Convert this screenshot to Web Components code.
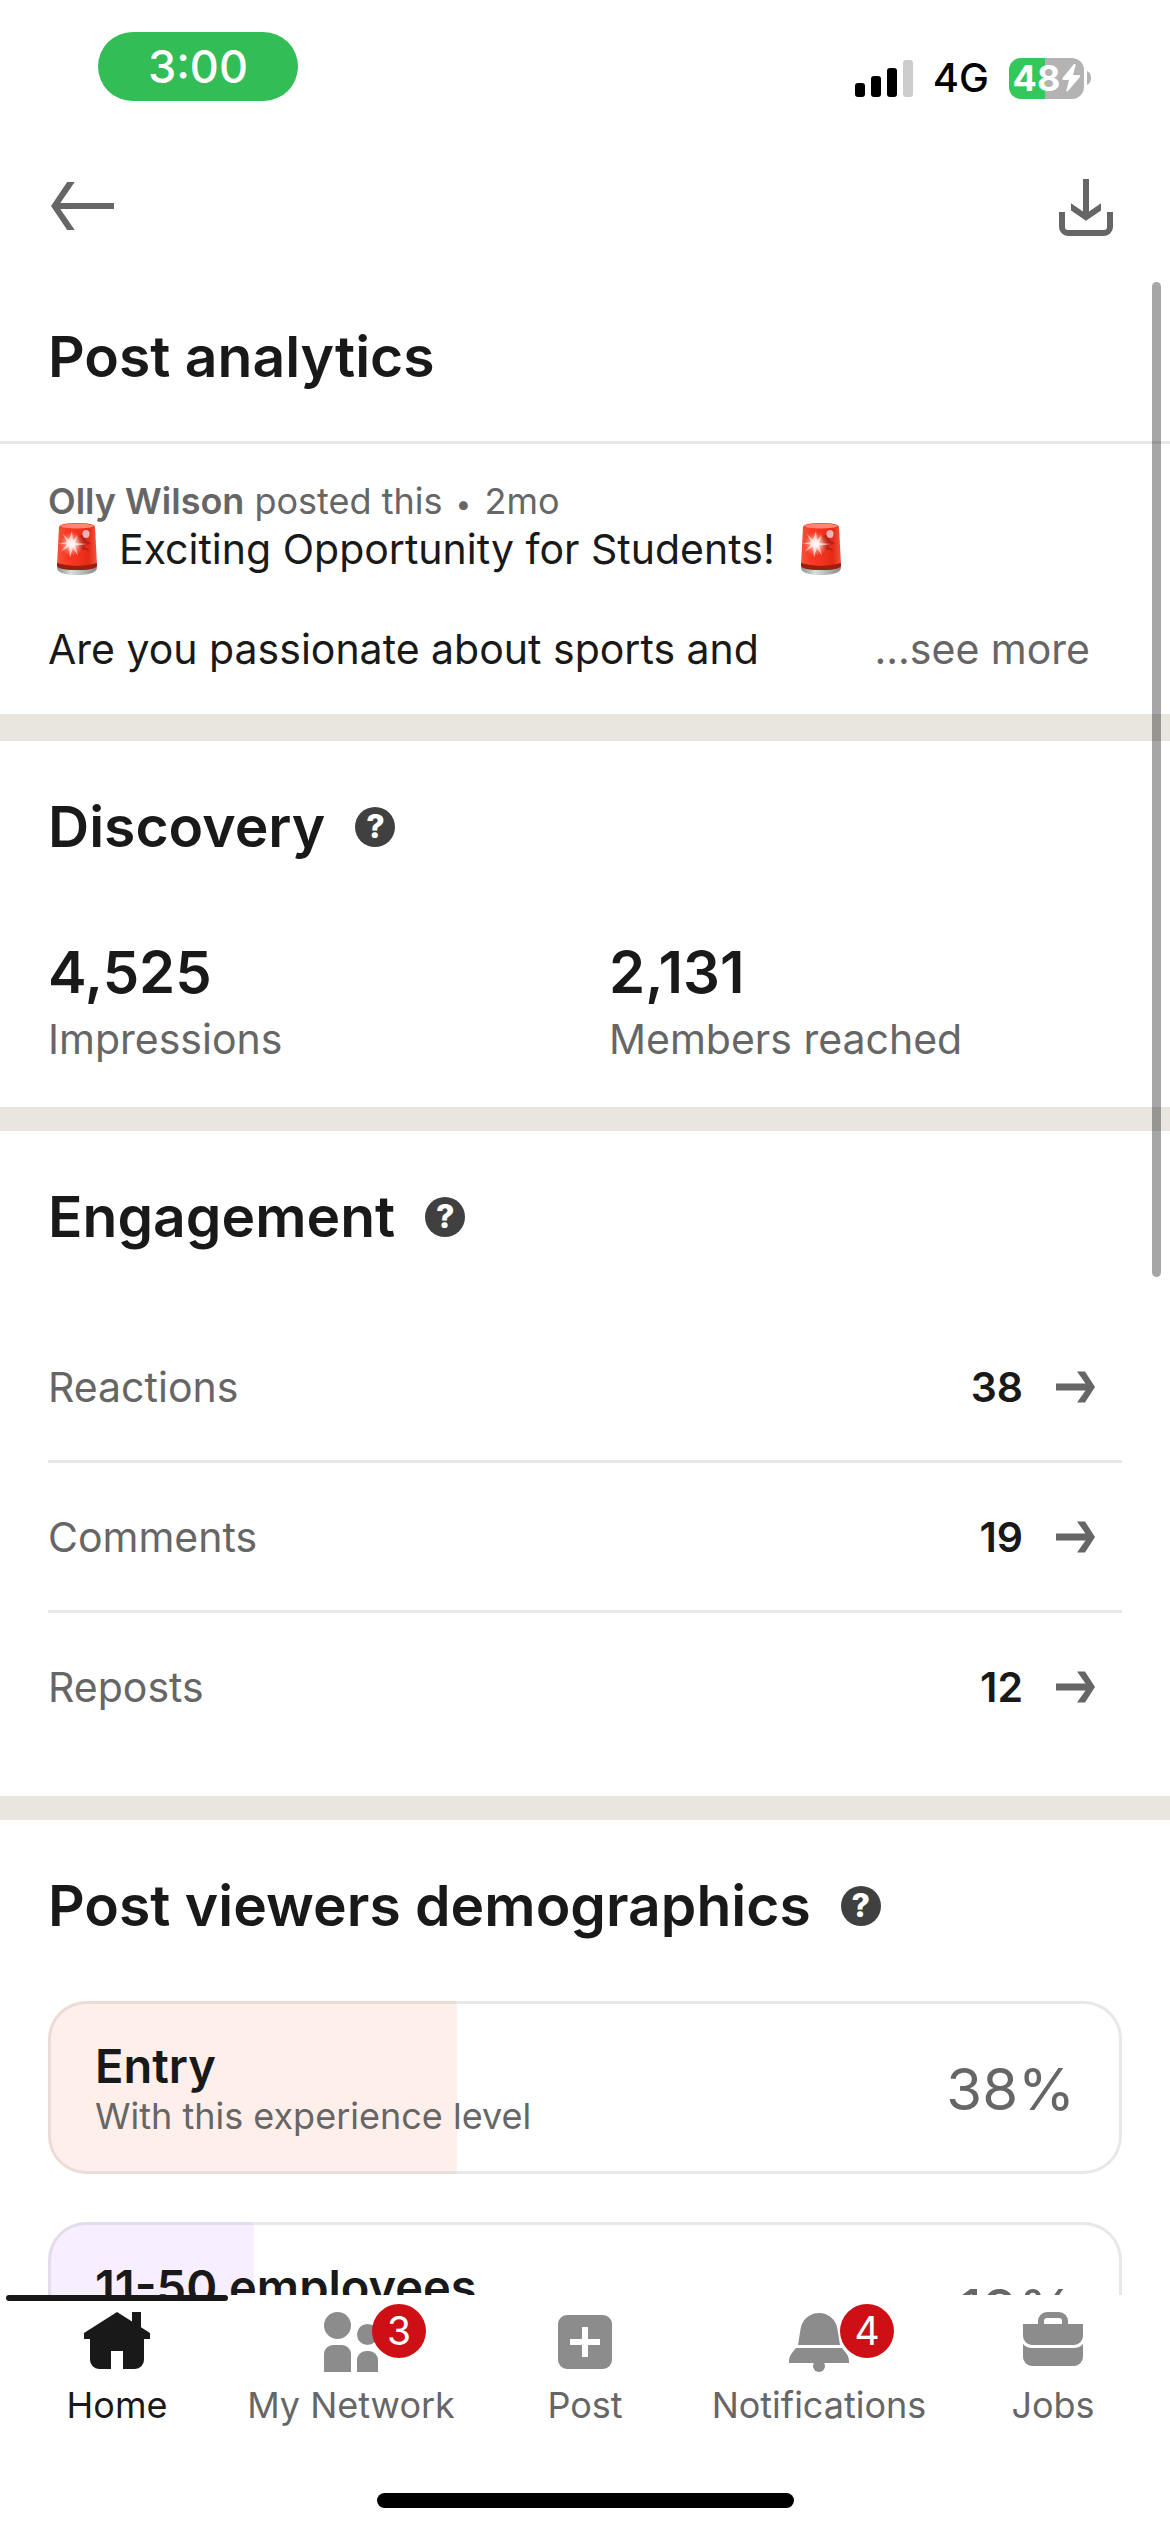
<!DOCTYPE html>
<html lang="en">
<head>
<meta charset="utf-8">
<meta name="viewport" content="width=device-width, initial-scale=1">
<title>Post analytics</title>
<style>
  html, body { margin: 0; height: 100%; }
  body {
    --ink: #191919; --muted: #666; --line: #e8e8e8; --band: #e9e5df; --icon: #8c8c8c;
    --gutter: 48px;
    font-family: Inter, "Liberation Sans", sans-serif;
    color: var(--ink); background: #fff;
  }
</style>
</head>
<body>
<analytics-app>
  <status-bar slot="top" time="3:00" network="4G" battery="48"></status-bar>
  <nav-header slot="top"></nav-header>

  <page-title>Post analytics</page-title>
  <post-summary author="Olly Wilson" age="2mo">
    <span slot="headline">Exciting Opportunity for Students!</span>
    <span slot="body">Are you passionate about sports and</span>
  </post-summary>

  <analytics-section heading="Discovery">
    <stat-group>
      <stat-item value="4,525">Impressions</stat-item>
      <stat-item value="2,131">Members reached</stat-item>
    </stat-group>
  </analytics-section>

  <analytics-section heading="Engagement">
    <metric-list>
      <metric-row value="38">Reactions</metric-row>
      <metric-row value="19">Comments</metric-row>
      <metric-row value="12">Reposts</metric-row>
    </metric-list>
  </analytics-section>

  <analytics-section heading="Post viewers demographics">
    <demographic-list>
      <demographic-card percent="38" tint="#ffefeb" edge="#ebdcd9" label="Entry">With this experience level</demographic-card>
      <demographic-card percent="19" tint="#f7eeff" edge="#e3dceb" label="11-50 employees"></demographic-card>
    </demographic-list>
  </analytics-section>

  <tab-bar slot="bottom">
    <tab-item icon="home" active>Home</tab-item>
    <tab-item icon="network" badge="3">My Network</tab-item>
    <tab-item icon="post">Post</tab-item>
    <tab-item icon="bell" badge="4">Notifications</tab-item>
    <tab-item icon="jobs">Jobs</tab-item>
  </tab-bar>
</analytics-app>

<script>
const define = (name, render) => customElements.define(name, class extends HTMLElement {
  constructor() { super(); this.attachShadow({ mode: 'open' }); }
  connectedCallback() {
    this.shadowRoot.innerHTML =
      `<style>*{box-sizing:border-box} :host{display:block} svg{display:block;flex:none}
        button{font:inherit;border:0;padding:0;background:none;color:inherit;cursor:pointer}
        a{color:inherit;text-decoration:none}</style>` + render(this);
  }
});
const attr = (el, name) => el.getAttribute(name) || '';

const icons = {
  home: '<path d="M12 2l5 3.2V2h3v5.1L23 9v2h-2v7a3 3 0 0 1-3 3h-4v-6h-4v6H6a3 3 0 0 1-3-3v-7H1V9z"/>',
  network: '<circle cx="7.5" cy="6.5" r="4.5"/><path d="M3 22v-6a3 3 0 0 1 3-3h3a3 3 0 0 1 3 3v6z"/><circle cx="17.5" cy="9.5" r="3.5"/><path d="M14 22v-4a3 3 0 0 1 3-3h1a3 3 0 0 1 3 3v4z"/>',
  post: '<path fill-rule="evenodd" d="M6 3h12a3 3 0 0 1 3 3v12a3 3 0 0 1-3 3H6a3 3 0 0 1-3-3V6a3 3 0 0 1 3-3zm5 4v4H7v2h4v4h2v-4h4v-2h-4V7z"/>',
  bell: '<path d="M5 13l.9-5.6a6.2 6.2 0 0 1 12.2 0L19 13zM4.300 14h15.400l1.300 1.700c.7.9 1 1.700 1 2.800v.5H2v-.5c0-1.100.3-1.900 1-2.800z"/><circle cx="12" cy="20" r="2"/>',
  jobs: '<path fill-rule="evenodd" d="M7 6V5a3 3 0 0 1 3-3h4a3 3 0 0 1 3 3v1h5v4a3 3 0 0 1-3 3H5a3 3 0 0 1-3-3V6zm2 0h6V5a1 1 0 0 0-1-1h-4a1 1 0 0 0-1 1z"/><path d="M2 12.700A4 4 0 0 0 5 14h14a4 4 0 0 0 3-1.300V17a3 3 0 0 1-3 3H5a3 3 0 0 1-3-3z"/>',
};

const siren = id => `<svg width="54" height="54" viewBox="-2 0 54 54" role="img" aria-label="Police car light">
  <defs>
    <linearGradient id="g${id}" x1="0" x2="1"><stop offset="0" stop-color="#f2553c"/><stop offset=".25" stop-color="#fb3a24"/><stop offset=".8" stop-color="#e62a18"/><stop offset="1" stop-color="#f0563c"/></linearGradient>
    <linearGradient id="b${id}" x1="0" x2="1"><stop offset="0" stop-color="#8e8e8e"/><stop offset=".35" stop-color="#dcdcdc"/><stop offset="1" stop-color="#8a8a8a"/></linearGradient>
    <radialGradient id="s${id}"><stop offset="0" stop-color="#fff"/><stop offset=".3" stop-color="#ffd9d2" stop-opacity=".9"/><stop offset="1" stop-color="#ff8d78" stop-opacity="0"/></radialGradient>
  </defs>
  <path d="M7 43q20 7 40 0v3q-1 7-20 7T7 46z" fill="url(#b${id})"/>
  <path d="M9 5q1-4 18-4t18 4l2 38q-1 5-20 5T7 43z" fill="url(#g${id})"/>
  <path d="M7 41q20 6 40 0v3q-2 4-20 4T7 44z" fill="#9c1d12"/>
  <ellipse cx="27" cy="4" rx="16" ry="2.500" fill="#f98a70"/>
  <path d="M28 14l9-3-1 7 5 3-7 3 6 5-11-2z" fill="#a91c12" opacity=".7"/>
  <ellipse cx="36" cy="12" rx="3.500" ry="4" fill="#f6c9d2" opacity=".85"/>
  <circle cx="22" cy="22" r="12" fill="url(#s${id})"/>
  <path d="M22 9l1 10 5-6-3 8 12 1-12 1.500 3 10-5-8-3 10-1-11-8 5 6-7-8-1 8-1.500-4-8 6 6z" fill="#fff" opacity=".65"/>
</svg>`;

define('analytics-app', () => `
  <style>
    :host { display: flex; flex-direction: column; height: 100vh; overflow: hidden; }
    .view { position: relative; flex: 1; min-height: 0; }
    main { height: 100%; overflow-y: auto; scrollbar-width: none; }
    .thumb { position: absolute; top: 9px; right: 9px; width: 9px; height: 995px; border-radius: 5px; background: rgba(0,0,0,.35); }
  </style>
  <slot name="top"></slot>
  <div class="view"><main><slot></slot></main><div class="thumb"></div></div>
  <slot name="bottom"></slot>`);

define('status-bar', el => `
  <style>
    :host { flex: none; }
    .bar { display: flex; justify-content: space-between; align-items: flex-start; height: 141px; padding: 32px 79px 0 98px; }
    .pill { width: 200px; height: 69px; border-radius: 35px; background: #33bd56; color: #fff; font-size: 45px; font-weight: 500; line-height: 69px; text-align: center; }
    .right { display: flex; align-items: center; gap: 20px; padding-top: 25px; color: #000; }
    .net { font-size: 40px; font-weight: 500; line-height: 42px; }
    .power { display: flex; align-items: center; gap: 3px; }
    .cell { display: flex; align-items: center; justify-content: center; gap: 2px; width: 75px; height: 41px; border-radius: 12px; color: #fff; font-size: 36px; font-weight: 700; line-height: 41px;
      background: linear-gradient(90deg, #34c759 ${attr(el, 'battery')}%, #b3b3b3 ${attr(el, 'battery')}%); }
  </style>
  <div class="bar">
    <div class="pill">${attr(el, 'time')}</div>
    <div class="right">
      <svg width="58" height="37" viewBox="0 0 58 37"><rect y="23" width="10" height="14" rx="3"/><rect x="16" y="16" width="10" height="21" rx="3"/><rect x="32" y="8" width="10" height="29" rx="3"/><rect x="48" width="10" height="37" rx="3" fill="#ccc"/></svg>
      <span class="net">${attr(el, 'network')}</span>
      <div class="power">
        <div class="cell"><span>${attr(el, 'battery')}</span><svg width="18" height="28" viewBox="0 0 18 28" fill="#fff"><path d="M12 0q2-1 1.500 1.500L11 11h6q2 .5.5 2.500L6 27q-2 1.500-1.500-1L7 16H1.500q-2-.5-.5-2.500z"/></svg></div>
        <svg width="4" height="14" viewBox="0 0 4 14" fill="#b3b3b3"><path d="M0 0q4 2 4 7T0 14z"/></svg>
      </div>
    </div>
  </div>`);

define('nav-header', () => `
  <style>
    :host { flex: none; }
    header { display: flex; justify-content: space-between; padding: 32px var(--gutter) 28px; color: var(--muted); }
  </style>
  <header>
    <button aria-label="Back"><svg width="72" height="72" viewBox="0 0 24 24" fill="currentColor"><path d="M1 11l5.400-8h2.500L4.100 10H22v2H4.100l4.800 7H6.400z"/></svg></button>
    <button aria-label="Download"><svg width="72" height="72" viewBox="0 0 24 24" fill="currentColor"><path d="M11 2h2v10.800l4-2.700v2.400l-5 3.400-5-3.400v-2.400l4 2.700zM3 13h2v5a1 1 0 0 0 1 1h12a1 1 0 0 0 1-1v-5h2v5a3 3 0 0 1-3 3H6a3 3 0 0 1-3-3z"/></svg></button>
  </header>`);

define('page-title', () => `
  <style>
    :host { padding: 48px var(--gutter); border-bottom: 3px solid var(--line); }
    h1 { margin: 0; font-size: 57px; font-weight: 600; line-height: 72px; }
  </style>
  <h1><slot></slot></h1>`);

define('post-summary', el => `
  <style>
    :host { padding: 34px var(--gutter) 40px; border-bottom: 3px solid var(--band); }
    p { margin: 0; font-size: 41px; line-height: 50px; }
    .meta { font-size: 36px; line-height: 46px; color: var(--muted); }
    .meta b { font-weight: 600; }
    .dot { margin: 0 3px; font-size: 28px; line-height: 1; }
    .headline { display: flex; align-items: center; gap: 17px; padding-bottom: 50px; }
    .headline svg { margin: -2px 0; }
    .body { display: flex; justify-content: space-between; padding-right: 32px; }
    button { color: var(--muted); }
  </style>
  <p class="meta"><b>${attr(el, 'author')}</b> posted this <span class="dot">•</span> ${attr(el, 'age')}</p>
  <p class="headline">${siren('a')}<slot name="headline"></slot>${siren('b')}</p>
  <p class="body"><slot name="body"></slot><button>...see more</button></p>`);

define('analytics-section', el => `
  <style>
    :host { border-top: 24px solid var(--band); }
    header { display: flex; align-items: center; gap: 30px; padding: 50px var(--gutter) 0; }
    h2 { margin: 0; font-size: 57px; font-weight: 600; line-height: 72px; }
    button { width: 40px; height: 40px; border-radius: 50%; background: #404040; color: #fff; font-size: 32px; font-weight: 800; line-height: 40px; text-align: center; }
  </style>
  <header><h2>${attr(el, 'heading')}</h2><button aria-label="About ${attr(el, 'heading')}">?</button></header>
  <slot></slot>`);

define('stat-group', () => `
  <style>:host { display: grid; grid-template-columns: 1fr 1fr; gap: 48px; padding: 73px var(--gutter) 43px; }</style>
  <slot></slot>`);

define('stat-item', el => `
  <style>
    strong { display: block; font-size: 58px; font-weight: 600; line-height: 72px; padding-bottom: 6px; }
    span { display: block; font-size: 41px; line-height: 50px; color: var(--muted); }
  </style>
  <strong>${attr(el, 'value')}</strong><span><slot></slot></span>`);

define('metric-list', () => `
  <style>
    :host { padding: 60px var(--gutter) 36px; }
    ::slotted(:not(:last-child)) { border-bottom: 3px solid var(--line); }
  </style>
  <slot></slot>`);

define('metric-row', el => `
  <style>
    a { display: flex; align-items: center; gap: 27px; height: 147px; padding-right: 24px; font-size: 41px; line-height: 50px; color: var(--muted); }
    .label { flex: 1; }
    b { font-weight: 600; color: var(--ink); }
  </style>
  <a href="#"><span class="label"><slot></slot></span><b>${attr(el, 'value')}</b>
    <svg width="48" height="48" viewBox="0 0 48 48" fill="currentColor"><path d="M6 20.500h29.500L27 8.500h8L45 24 35 39.500h-8L35.500 27.500H6z"/></svg></a>`);

define('demographic-list', () => `
  <style>:host { display: grid; gap: 48px; padding: 59px var(--gutter) 48px; }</style>
  <slot></slot>`);

define('demographic-card', el => `
  <style>
    a { display: flex; align-items: center; justify-content: space-between; padding: 35px 44px 32px;
      border: 3px solid transparent; border-radius: 38px;
      background:
        linear-gradient(90deg, ${attr(el, 'tint')} ${attr(el, 'percent')}%, #fff ${attr(el, 'percent')}%) padding-box,
        linear-gradient(90deg, ${attr(el, 'edge')} ${attr(el, 'percent')}%, var(--line) ${attr(el, 'percent')}%) border-box; }
    strong { display: block; font-size: 47px; font-weight: 600; line-height: 54px; }
    small { display: block; min-height: 46px; font-size: 36px; line-height: 46px; color: var(--muted); }
    .pct { font-size: 58px; line-height: 72px; color: var(--muted); }
  </style>
  <a href="#"><span><strong>${attr(el, 'label')}</strong><small><slot></slot></small></span><span class="pct">${attr(el, 'percent')}%</span></a>`);

define('tab-bar', () => `
  <style>
    :host { flex: none; background: #fff; }
    nav { display: grid; grid-template-columns: repeat(5, 1fr); height: 198px; }
    .home { width: 417px; height: 15px; margin: 0 auto 24px; border-radius: 8px; background: #000; }
  </style>
  <nav><slot></slot></nav><div class="home"></div>`);

define('tab-item', el => `
  <style>
    a { position: relative; display: flex; flex-direction: column; align-items: center; gap: 4px; padding-top: 11px; font-size: 36px; line-height: 46px; color: var(--muted); white-space: nowrap; }
    svg { fill: var(--icon); }
    :host([active]) a { color: var(--ink); }
    :host([active]) svg { fill: var(--ink); }
    :host([active]) a::before { content: ""; position: absolute; top: 0; left: 6px; right: 6px; height: 6px; border-radius: 3px; background: var(--ink); }
    .icon { position: relative; }
    .badge { position: absolute; left: 57px; top: -2px; width: 54px; height: 54px; border-radius: 50%; background: #cc1016; color: #fff; font-size: 39px; line-height: 54px; text-align: center; }
  </style>
  <a href="#"><span class="icon"><svg width="72" height="72" viewBox="0 0 24 24">${icons[attr(el, 'icon')]}</svg>${
    attr(el, 'badge') ? `<span class="badge">${attr(el, 'badge')}</span>` : ''}</span><slot></slot></a>`);
</script>
</body>
</html>
